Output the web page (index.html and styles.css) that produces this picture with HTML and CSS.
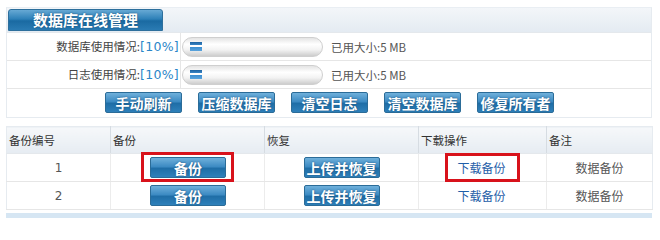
FILE: index.html
```html
<!DOCTYPE html>
<html lang="zh-CN">
<head>
<meta charset="utf-8">
<title>数据库在线管理</title>
<link rel="stylesheet" href="styles.css">
</head>
<body>
<div class="page">
  <div class="panel">
    <div class="panel-head"><div class="tab">数据库在线管理</div></div>
    <div class="row">
      <div class="label">数据库使用情况:<span class="pct">[10%]</span></div>
      <div class="info">
        <div class="bar"><span class="fill"></span></div>
        <span class="used">已用大小:5 MB</span>
      </div>
    </div>
    <div class="row">
      <div class="label">日志使用情况:<span class="pct">[10%]</span></div>
      <div class="info">
        <div class="bar"><span class="fill"></span></div>
        <span class="used">已用大小:5 MB</span>
      </div>
    </div>
    <div class="actions">
      <button class="btn">手动刷新</button>
      <button class="btn">压缩数据库</button>
      <button class="btn">清空日志</button>
      <button class="btn">清空数据库</button>
      <button class="btn">修复所有者</button>
    </div>
  </div>

  <table class="list">
    <colgroup>
      <col class="c1"><col class="c2"><col class="c3"><col class="c4"><col class="c5">
    </colgroup>
    <thead>
      <tr><th>备份编号</th><th>备份</th><th>恢复</th><th>下载操作</th><th>备注</th></tr>
    </thead>
    <tbody>
      <tr>
        <td>1</td>
        <td><button class="btn small hl-btn">备份</button></td>
        <td><button class="btn small">上传并恢复</button></td>
        <td><a class="dl hl-link" href="#">下载备份</a></td>
        <td class="note">数据备份</td>
      </tr>
      <tr>
        <td>2</td>
        <td><button class="btn small">备份</button></td>
        <td><button class="btn small">上传并恢复</button></td>
        <td><a class="dl" href="#">下载备份</a></td>
        <td class="note">数据备份</td>
      </tr>
    </tbody>
  </table>
  <div class="strip"></div>
</div>
</body>
</html>
```

FILE: styles.css
```css
html, body {
  margin: 0;
  padding: 0;
  background: #fff;
}
body {
  font-family: "Noto Sans CJK SC", "DejaVu Sans", sans-serif;
  font-size: 12px;
  color: #333;
}
.page {
  padding: 7px 8px 0 6px;
}
.panel {
  border: 1px solid #e6ebf0;
  border-top-color: #e9eef3;
}
.panel-head {
  height: 25px;
  padding: 1px 0 0 1px;
  box-sizing: border-box;
  background: linear-gradient(#f3f6f9, #e4ebf2);
  border-bottom: 1px solid #e4e8ec;
}
.tab {
  width: 155px;
  height: 22px;
  box-sizing: border-box;
  background: linear-gradient(#67a9d4 0%, #2d80b8 45%, #1a6aa2 55%, #2a7bb3 100%);
  border: 1px solid #2d6f9c;
  border-radius: 3px 3px 0 0;
  color: #fff;
  font-weight: bold;
  font-size: 15px;
  line-height: 20px;
  text-align: center;
  text-shadow: 0 0 2px #124a73;
}
.row {
  display: grid;
  grid-template-columns: 174px 1fr;
  height: 27px;
  border-bottom: 1px solid #e6e6e6;
}
.label {
  text-align: right;
  line-height: 27px;
  border-right: 1px solid #e6e6e6;
  padding-right: 1px;
  color: #444;
  font-size: 11.5px;
}
.pct {
  font-family: "DejaVu Sans", sans-serif;
  font-size: 12.5px;
  color: #2a86c8;
  letter-spacing: 0.3px;
}
.info {
  display: flex;
  align-items: center;
  padding-left: 1px;
}
.bar {
  width: 141px;
  height: 20px;
  box-sizing: border-box;
  border: 1px solid #cfcfcf;
  border-radius: 10px;
  background: linear-gradient(#e4e4e4 0%, #ffffff 35%, #f3f3f3 65%, #cdcdcd 100%);
  display: flex;
  align-items: center;
  padding-left: 7px;
}
.fill {
  display: block;
  width: 12px;
  height: 9px;
  background: linear-gradient(#1d62a0 0%, #3a87c8 35%, #ffffff 36%, #ffffff 55%, #3b8ed1 56%, #5aa3dc 100%);
}
.used {
  margin-left: 8px;
  color: #555;
  font-size: 11.5px;
}
.actions {
  display: flex;
  gap: 16px;
  padding: 3px 0 4px 98px;
  height: 28px;
  box-sizing: border-box;
}
.btn {
  width: 77px;
  height: 21px;
  padding: 0;
  box-sizing: border-box;
  border: 1px solid #2b6c98;
  border-radius: 2px;
  background: linear-gradient(#6fb0db 0%, #3d8bc3 45%, #1f6ea7 55%, #2e80ba 100%);
  color: #fff;
  font-family: "Noto Sans CJK SC", sans-serif;
  font-weight: bold;
  font-size: 14px;
  line-height: 18px;
  text-shadow: 0 0 2px #184e78;
  cursor: pointer;
}
.btn.small {
  width: 76px;
  height: 21px;
}
.list {
  width: 646px;
  margin-top: 8px;
  border-collapse: collapse;
  border: 1px solid #e6ebf0;
  table-layout: fixed;
}
.c1 { width: 104px; }
.c2 { width: 154px; }
.c3 { width: 154px; }
.c4 { width: 128px; }
.c5 { width: 106px; }
.list th {
  height: 26px;
  text-align: left;
  font-weight: normal;
  color: #333;
  font-size: 11.5px;
  padding: 0 2px;
  background: linear-gradient(#f6f8fa, #e6ecf2);
  border-left: 1px solid #d6dce2;
  border-bottom: 1px solid #e4e8ec;
}
.list th:first-child { border-left: none; }
.list td {
  height: 27px;
  padding: 0;
  text-align: center;
  color: #555;
  border-left: 1px solid #ececec;
  border-bottom: 1px solid #e6e6e6;
}
.list td:first-child {
  border-left: none;
  font-family: "DejaVu Sans", sans-serif;
  font-size: 12px;
}
.list td:nth-child(2) { text-align: left; }
.list td:nth-child(2) .btn { margin-left: 39px; }
.list td:nth-child(4) { padding-right: 2px; }
.dl {
  color: #1f5ea8;
  text-decoration: none;
}
.note { color: #666; }
.hl-btn, .hl-link {
  position: relative;
}
.hl-btn::after {
  content: "";
  position: absolute;
  left: -10px;
  right: -9px;
  top: -6px;
  bottom: -5px;
  border: 3px solid #d8121b;
}
.hl-link {
  display: inline-block;
}
.hl-link::after {
  content: "";
  position: absolute;
  left: -12px;
  right: -14px;
  top: -6px;
  bottom: -6px;
  border: 3px solid #d8121b;
}
.strip {
  height: 5px;
  margin-top: 3px;
  background: #d6e6f3;
}
```
